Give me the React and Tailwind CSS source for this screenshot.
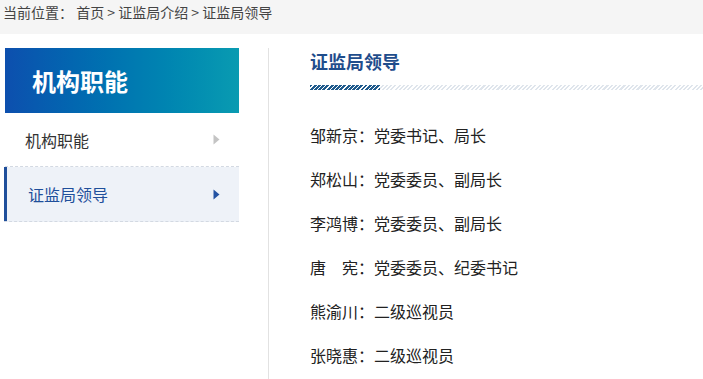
const LEADERS = [
  { name: '邹新京', title: '党委书记、局长' },
  { name: '郑松山', title: '党委委员、副局长' },
  { name: '李鸿博', title: '党委委员、副局长' },
  { name: '唐　宪', title: '党委委员、纪委书记' },
  { name: '熊渝川', title: '二级巡视员' },
  { name: '张晓惠', title: '二级巡视员' },
];

const Arrow = ({ color }) => (
  <svg width="7" height="11" viewBox="0 0 7 11" className="shrink-0">
    <polygon points="0.5,0.5 6.5,5.5 0.5,10.5" fill={color} />
  </svg>
);

export default function App() {
  return (
    <div className="w-[703px] h-[379px] overflow-hidden bg-white font-['Noto_Sans_CJK_SC',sans-serif] text-[#333]">
      {/* breadcrumb */}
      <div className="h-[34px] bg-[#f5f5f5] pl-[3px] text-[14px] leading-[25px] text-[#444]">
        当前位置：&nbsp;首页 &gt; 证监局介绍 &gt; 证监局领导
      </div>

      <div className="flex pt-[14px]">
        {/* sidebar */}
        <aside className="w-[234px] ml-[5px] shrink-0">
          <div className="h-[65px] flex items-center pl-[27px] bg-gradient-to-r from-[#0d4fae] to-[#0a9bb1] text-white text-[24px] font-bold">
            机构职能
          </div>
          <div className="h-[54px] flex items-center justify-between pl-[20px] pr-[19px] border-b border-dashed border-[#d3d9e2] text-[16px] text-[#333]">
            <span>机构职能</span>
            <Arrow color="#c4c4c4" />
          </div>
          <div className="h-[55px] -ml-px flex items-center justify-between pl-[24px] pr-[19px] bg-[#eef2f8] shadow-[inset_3px_0_0_#1f4f9b] border-b border-dashed border-[#d3d9e2] text-[16px] text-[#1f4f9b]">
            <span>证监局领导</span>
            <Arrow color="#2453a3" />
          </div>
        </aside>

        {/* divider */}
        <div className="ml-[29px] w-px h-[331px] bg-[#e2e2e2] shrink-0" />

        {/* content */}
        <main className="flex-1 pl-[41px]">
          <h2 className="text-[18px] leading-[26px] font-bold text-[#1f4d8c]">证监局领导</h2>
          <div className="mt-[11px] h-[5px] relative bg-[repeating-linear-gradient(135deg,#dfe5ec_0px,#dfe5ec_1.5px,#ffffff_1.5px,#ffffff_3px)]">
            <div className="absolute left-0 top-0 h-full w-[70px] bg-[repeating-linear-gradient(135deg,#1f5a8c_0px,#1f5a8c_2px,#ffffff_2px,#ffffff_3px)]" />
          </div>
          <ul className="mt-[23px] text-[16px] text-[#222]">
            {LEADERS.map((l) => (
              <li key={l.name} className="h-[44px] leading-[44px]">
                {l.name}：{l.title}
              </li>
            ))}
          </ul>
        </main>
      </div>
    </div>
  );
}
